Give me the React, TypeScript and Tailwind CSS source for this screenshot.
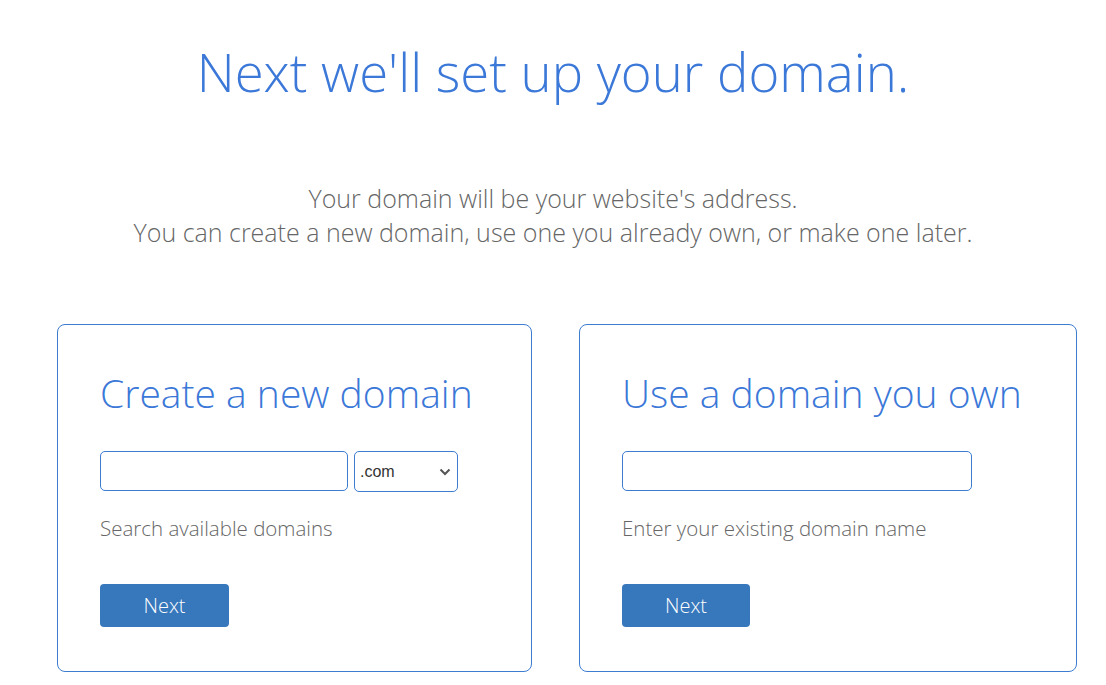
import React from "react";

const Chevron = () => (
  <svg width="12" height="8" viewBox="0 0 12 8" className="pointer-events-none absolute right-[7px] top-[17px]">
    <path d="M1.5 1.5 L6 6 L10.5 1.5" fill="none" stroke="#555" strokeWidth="2" />
  </svg>
);

export default function App() {
  return (
    <div className="min-h-[685px] w-full bg-white" style={{ fontFamily: '"Open Sans", sans-serif' }}>
      <h1 className="pt-[39px] text-center text-[52.7px] font-light leading-[65px] text-[#3b78d8]">
        Next we'll set up your domain.
      </h1>
      <div className="mt-[77px] text-center text-[25px] font-light leading-[34px] text-[#666666]">
        <p>Your domain will be your website's address.</p>
        <p>You can create a new domain, use one you already own, or make one later.</p>
      </div>
      <div className="ml-[57px] mt-[75px] flex gap-[47px]">
        <div className="h-[348px] w-[475px] rounded-[8px] border border-[#3d7ccf] pl-[42px] pt-[44px]">
          <h2 className="text-[39px] font-light leading-[48px] text-[#3b78d8]">Create a new domain</h2>
          <div className="mt-[34px] flex h-[40px] items-start gap-[6px]">
            <input
              type="text"
              className="h-[40px] w-[248px] rounded-[5px] border border-[#3d7ccf] px-2 text-[16px] outline-none"
            />
            <div className="relative">
              <select
                className="h-[41px] w-[104px] appearance-none rounded-[5px] border border-[#3d7ccf] bg-white pl-[5px] text-[16px] text-[#333] outline-none"
                style={{ fontFamily: '"Liberation Sans", Arial, sans-serif' }}
                defaultValue=".com"
              >
                <option>.com</option>
                <option>.net</option>
                <option>.org</option>
              </select>
              <Chevron />
            </div>
          </div>
          <p className="mt-[23px] text-[20.5px] font-light leading-[28px] text-[#666666]">Search available domains</p>
          <button className="mt-[42px] h-[43px] w-[129px] rounded-[4px] bg-[#3777bc] text-[20px] font-light text-white">
            Next
          </button>
        </div>
        <div className="h-[348px] w-[498px] rounded-[8px] border border-[#3d7ccf] pl-[42px] pt-[44px]">
          <h2 className="text-[39px] font-light leading-[48px] text-[#3b78d8]">Use a domain you own</h2>
          <div className="mt-[34px] flex h-[40px]">
            <input
              type="text"
              className="h-[40px] w-[350px] rounded-[5px] border border-[#3d7ccf] px-2 text-[16px] outline-none"
            />
          </div>
          <p className="mt-[23px] text-[20.5px] font-light leading-[28px] text-[#666666]">Enter your existing domain name</p>
          <button className="mt-[42px] h-[43px] w-[128px] rounded-[4px] bg-[#3777bc] text-[20px] font-light text-white">
            Next
          </button>
        </div>
      </div>
    </div>
  );
}
